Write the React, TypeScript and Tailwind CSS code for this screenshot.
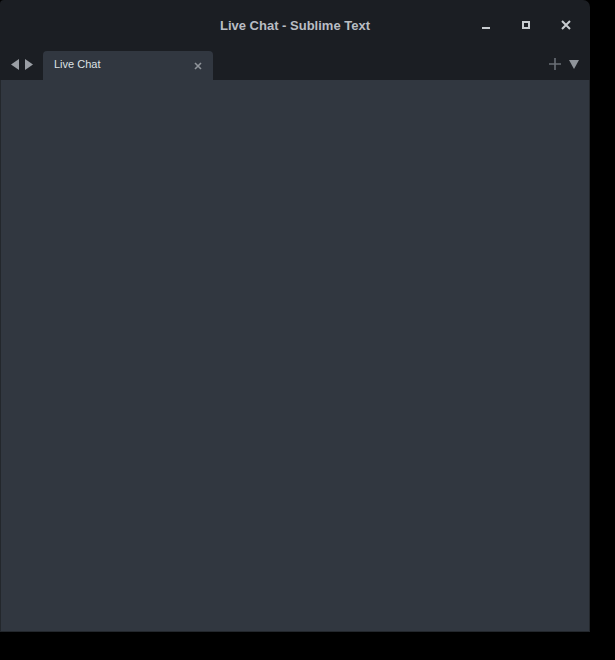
import React from 'react';

const App: React.FC = () => {
  return (
    <div className="min-h-screen w-full bg-black" style={{ fontFamily: '"Liberation Sans", Arial, sans-serif' }}>
      <div className="flex h-[632px] w-[590px] flex-col overflow-hidden rounded-tl-[4px] rounded-tr-[7px] bg-[#1b1e23]">
        {/* Title bar */}
        <div className="relative flex h-[51px] shrink-0 items-center justify-center">
          <span className="text-[13px] font-bold text-[#b9bdc3]">Live Chat - Sublime Text</span>
          <div className="absolute right-0 top-0 flex h-full items-center">
            <button className="flex h-[50px] w-[40px] items-center justify-center">
              <span className="mt-[5px] block h-[2px] w-[8px] bg-[#c8ccd0]" />
            </button>
            <button className="flex h-[50px] w-[40px] items-center justify-center">
              <span className="-mt-[2px] block h-[8px] w-[8px] border-2 border-[#c8ccd0]" />
            </button>
            <button className="mr-[4px] flex h-[50px] w-[40px] items-center justify-center">
              <svg width="10" height="10" viewBox="0 0 10 10" className="-mt-[2px]">
                <path d="M1 1L9 9M9 1L1 9" stroke="#c8ccd0" strokeWidth="2" />
              </svg>
            </button>
          </div>
        </div>

        {/* Tab row */}
        <div className="flex h-[29px] shrink-0 items-end">
          <div className="flex h-full w-[43px] items-center justify-center gap-[6px] pb-[2px]">
            <svg width="8" height="11" viewBox="0 0 8 11">
              <path d="M8 0L0 5.5L8 11Z" fill="#9a9ea4" />
            </svg>
            <svg width="8" height="11" viewBox="0 0 8 11">
              <path d="M0 0L8 5.5L0 11Z" fill="#9a9ea4" />
            </svg>
          </div>
          <div className="flex h-full w-[170px] items-center justify-between rounded-t-[4px] bg-[#313740] pl-[11px] pr-[11px]">
            <span className="-mt-[3px] text-[11px] text-[#dde1e5]">Live Chat</span>
            <svg width="8" height="8" viewBox="0 0 8 8" className="mt-[1px]">
              <path d="M1 1L7 7M7 1L1 7" stroke="#8f949a" strokeWidth="1.6" />
            </svg>
          </div>
          <div className="flex-1" />
          <div className="flex h-full items-center gap-[8px] pr-[11px]">
            <svg width="12" height="12" viewBox="0 0 12 12" className="-mt-[3px]">
              <path d="M6 0V12M0 6H12" stroke="#6a6f76" strokeWidth="1.6" />
            </svg>
            <svg width="10" height="9" viewBox="0 0 10 9" className="-mt-[3px]">
              <path d="M0 0H10L5 9Z" fill="#8f949a" />
            </svg>
          </div>
        </div>

        {/* Editor area */}
        <div className="flex-1 border-x border-b border-[#23272c] bg-[#313740]" />
      </div>
    </div>
  );
};

export default App;
